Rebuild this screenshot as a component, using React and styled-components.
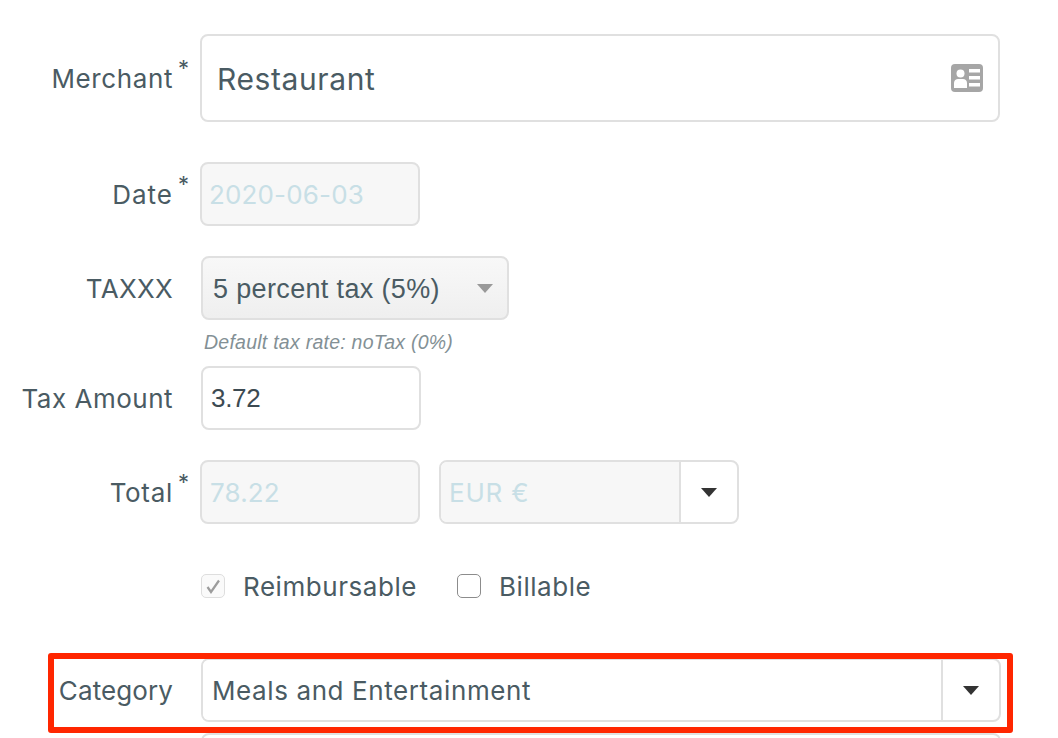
import styled, { createGlobalStyle } from "styled-components";

const GlobalStyle = createGlobalStyle`
  html, body {
    margin: 0;
    padding: 0;
    height: 738px;
    overflow: hidden;
    background: #fff;
  }
  body {
    font-family: "Inter", "Liberation Sans", sans-serif;
    color: #4a5b63;
  }
`;

const Form = styled.div`
  display: flex;
  flex-direction: column;
  width: 1058px;
  height: 738px;
  overflow: hidden;
  padding-top: 34px;
  box-sizing: border-box;

  > * {
    flex-shrink: 0;
  }
`;

const Row = styled.div`
  position: relative;
  display: grid;
  grid-template-columns: 173px 1fr;
  column-gap: ${(p) => p.$gap || 28}px;
  align-items: center;
  margin-top: ${(p) => p.$top || 0}px;
`;

const Label = styled.label`
  position: relative;
  justify-self: end;
  padding-top: 2px;
  font-size: 26px;
  letter-spacing: ${(p) => p.$spacing ?? 0.5}px;
  line-height: 32px;
  color: #4a5b63;
  white-space: nowrap;
`;

const Star = styled.span`
  position: absolute;
  left: 100%;
  top: -5px;
  margin-left: 5px;
  font-size: 22px;
  line-height: 24px;
`;

const Field = styled.div`
  box-sizing: border-box;
  display: flex;
  align-items: center;
  justify-content: space-between;
  width: ${(p) => p.$width}px;
  height: ${(p) => p.$height || 64}px;
  padding: 0 ${(p) => p.$pad || 8}px;
  border: 2px solid #e0e0e0;
  border-radius: 8px;
  background: ${(p) => (p.$disabled ? "#f7f7f7" : "#fff")};
  color: ${(p) => (p.$disabled ? "#c8dfe6" : "#4a5b63")};
  font-size: 26px;
  letter-spacing: 0.15px;
  white-space: nowrap;
`;

const MerchantValue = styled.span`
  padding-top: 2px;
  font-size: 30px;
  letter-spacing: 0.6px;
`;

const PlainValue = styled.span`
  font-family: "Liberation Sans", sans-serif;
  font-size: 26px;
  letter-spacing: -0.3px;
  color: #3c4a52;
`;

const Select = styled.div`
  box-sizing: border-box;
  display: flex;
  align-items: center;
  justify-content: space-between;
  width: 308px;
  height: 64px;
  padding: 0 14px 0 10px;
  border: 2px solid #e0e0e0;
  border-radius: 8px;
  background: linear-gradient(#f8f8f8, #efefef);
  font-family: "Liberation Sans", sans-serif;
  font-size: 27px;
  letter-spacing: 0.35px;
  color: #4a5b63;
`;

const SelectText = styled.span`
  padding-top: 2px;
`;

const Caret = styled.span`
  width: 0;
  height: 0;
  border-left: ${(p) => p.$size}px solid transparent;
  border-right: ${(p) => p.$size}px solid transparent;
  border-top: ${(p) => p.$size + 1}px solid ${(p) => p.$color};
`;

const Hint = styled.div`
  margin: 10px 0 0 204px;
  height: 26px;
  font-family: "Liberation Sans", sans-serif;
  font-size: 19.5px;
  font-style: italic;
  letter-spacing: 0.25px;
  line-height: 24px;
  color: #839095;
`;

const Controls = styled.div`
  display: flex;
  gap: 19px;
`;

const Combo = styled.div`
  box-sizing: border-box;
  display: flex;
  width: ${(p) => p.$width}px;
  height: ${(p) => p.$height}px;
  border: 2px solid #e0e0e0;
  border-radius: 8px;
  overflow: hidden;
  background: #fff;
`;

const ComboText = styled.div`
  flex: 1;
  display: flex;
  align-items: center;
  padding-left: ${(p) => p.$pad}px;
  background: ${(p) => (p.$disabled ? "#f7f7f7" : "#fff")};
  color: ${(p) => (p.$disabled ? "#c8dfe6" : "#4a5b63")};
  font-size: 26px;
  letter-spacing: ${(p) => p.$spacing}px;
`;

const ComboButton = styled.div`
  display: flex;
  align-items: center;
  justify-content: center;
  width: 56px;
  border-left: 2px solid #e0e0e0;
`;

const Checks = styled.div`
  display: flex;
  align-items: center;
  margin: 45px 0 1px 201px;
  height: 34px;
`;

const Check = styled.div`
  display: flex;
  align-items: center;
  gap: 18px;
  margin-right: 40px;
  font-size: 26px;
  letter-spacing: 0.55px;
`;

const Box = styled.span`
  box-sizing: border-box;
  display: flex;
  align-items: center;
  justify-content: center;
  width: 24px;
  height: 24px;
  border: 1.5px solid ${(p) => (p.$disabled ? "#dedede" : "#8c8c8c")};
  border-radius: 5px;
  background: ${(p) => (p.$disabled ? "#fafafa" : "#fff")};
`;

const Highlight = styled.div`
  position: absolute;
  top: -5px;
  left: 48px;
  box-sizing: border-box;
  width: 965px;
  height: 80px;
  border: 6px solid #ff2600;
  border-radius: 3px;
  pointer-events: none;
`;

const NextField = styled.div`
  box-sizing: border-box;
  width: 800px;
  height: 60px;
  margin: 11px 0 0 201px;
  border: 2px solid #e0e0e0;
  border-radius: 8px;
`;

const CardIcon = () => (
  <svg width="32" height="28" viewBox="0 0 32 28">
    <rect width="32" height="28" rx="4" fill="#a6a6a6" />
    <circle cx="9.500" cy="9.500" r="4" fill="#fff" />
    <path d="M3 24v-5c0-2.500 2-4 4-4h5c2 0 4 1.500 4 4v5z" fill="#fff" />
    <path d="M18 5h11v3.500H18zM18 12h11v3.500H18zM18 19h11v3.500H18z" fill="#fff" />
  </svg>
);

const App = () => (
  <>
    <GlobalStyle />
    <Form>
      <Row $gap={27}>
        <Label $spacing={0.6}>
          Merchant<Star>*</Star>
        </Label>
        <Field $width={800} $height={88} $pad={15}>
          <MerchantValue>Restaurant</MerchantValue>
          <CardIcon />
        </Field>
      </Row>

      <Row $gap={27} $top={40}>
        <Label $spacing={1}>
          Date<Star>*</Star>
        </Label>
        <Field $width={220} $pad={7} $disabled>
          2020-06-03
        </Field>
      </Row>

      <Row $top={30}>
        <Label $spacing={0.3}>TAXXX</Label>
        <Select>
          <SelectText>5 percent tax (5%)</SelectText>
          <Caret $size={8} $color="#999" />
        </Select>
      </Row>
      <Hint>Default tax rate: noTax (0%)</Hint>

      <Row $top={10}>
        <Label>Tax Amount</Label>
        <Field $width={220}>
          <PlainValue>3.72</PlainValue>
        </Field>
      </Row>

      <Row $gap={27} $top={30}>
        <Label $spacing={0.7}>
          Total<Star>*</Star>
        </Label>
        <Controls>
          <Field $width={220} $disabled>
            78.22
          </Field>
          <Combo $width={300} $height={64}>
            <ComboText $disabled $pad={8} $spacing={0.8}>
              EUR €
            </ComboText>
            <ComboButton>
              <Caret $size={8} $color="#333" />
            </ComboButton>
          </Combo>
        </Controls>
      </Row>

      <Checks>
        <Check>
          <Box $disabled>
            <svg width="16" height="16" viewBox="0 0 16 16">
              <path d="M2.500 9l3.500 5L14 2.500" fill="none" stroke="#9c9c9c" strokeWidth="2.200" />
            </svg>
          </Box>
          Reimbursable
        </Check>
        <Check>
          <Box />
          Billable
        </Check>
      </Checks>

      <Row $top={54}>
        <Highlight />
        <Label $spacing={0.1}>Category</Label>
        <Combo $width={800} $height={64}>
          <ComboText $pad={9} $spacing={0.6}>
            Meals and Entertainment
          </ComboText>
          <ComboButton>
            <Caret $size={8} $color="#333" />
          </ComboButton>
        </Combo>
      </Row>
      <NextField />
    </Form>
  </>
);

export default App;
